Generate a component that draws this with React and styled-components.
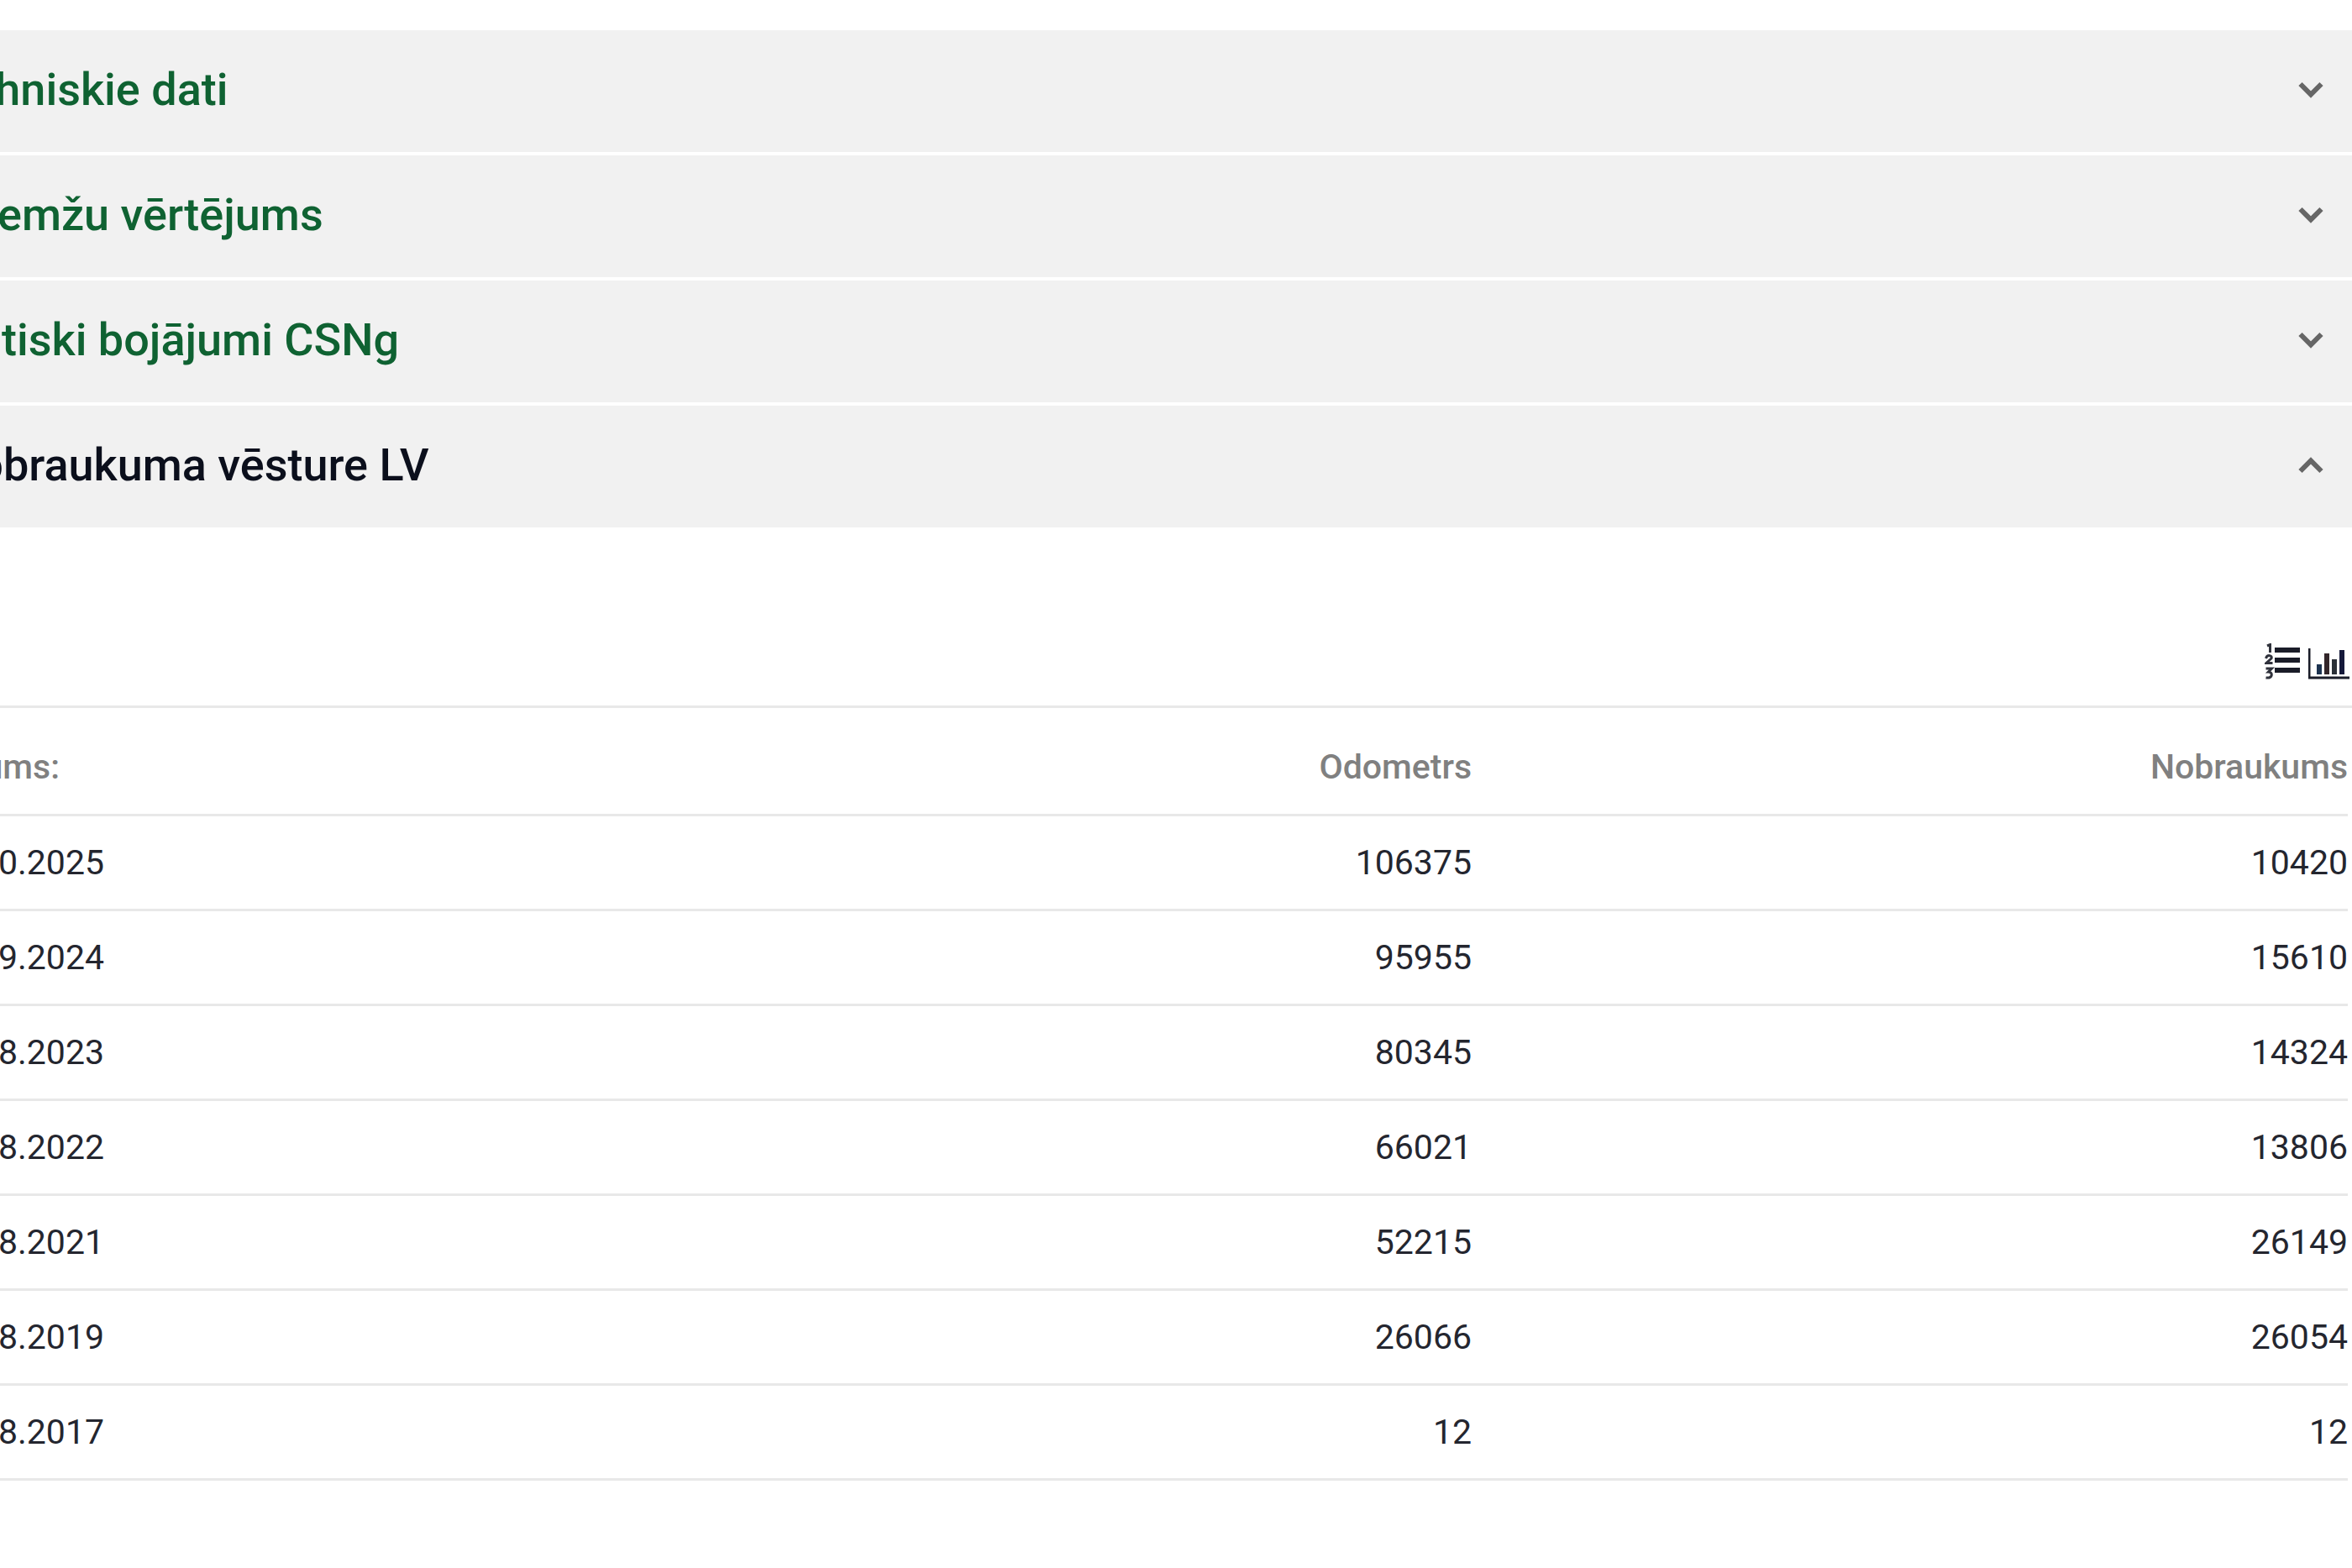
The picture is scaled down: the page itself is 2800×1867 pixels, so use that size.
import React from "react";
import styled, { createGlobalStyle } from "styled-components";

const Global = createGlobalStyle`
  html, body { margin: 0; padding: 0; background: #fff; }
  body { font-family: Roboto, "Liberation Sans", sans-serif; }
`;

const Page = styled.div`
  width: 2800px;
  height: 1867px;
  overflow: hidden;
  background: #fff;
  padding-top: 36px;
  box-sizing: border-box;
`;

const Accordion = styled.section`
  display: flex;
  flex-direction: column;
  gap: 4.5px;
`;

const AccordionRow = styled.div`
  height: 144.5px;
  box-sizing: border-box;
  margin-left: -65px;
  padding: 0 34px 3px 0;
  display: flex;
  align-items: center;
  justify-content: space-between;
  background: #f1f1f1;
`;

const AccordionTitle = styled.span`
  font-size: 54px;
  font-weight: 500;
  color: ${(p) => (p.$open ? "#0b0f1c" : "#0f6232")};
`;

const Chevron = styled.svg`
  width: 30px;
  height: 20px;
  fill: none;
  stroke: #666;
  stroke-width: 6;
  transform: ${(p) => (p.$open ? "rotate(180deg)" : "none")};
`;

const Toolbar = styled.div`
  height: 212px;
  display: flex;
  align-items: flex-end;
  justify-content: flex-end;
  gap: 7px;
  padding-right: 3px;
  padding-bottom: 30px;
  box-sizing: border-box;
`;

const ToolIcon = styled.svg`
  display: block;
  fill: #1a1c28;
`;

const Table = styled.div`
  border-top: 3px solid #e8e8e8;
  margin-left: -82px;
  padding-right: 5px;
`;

const Row = styled.div`
  display: grid;
  grid-template-columns: 1fr auto 1043px;
  height: ${(p) => (p.$head ? "129px" : "113px")};
  padding-top: ${(p) => (p.$head ? "15px" : "0")};
  box-sizing: border-box;
  border-bottom: 3px solid #e8e8e8;
  align-items: center;
  font-size: 41px;
  font-weight: ${(p) => (p.$head ? 500 : 400)};
  color: ${(p) => (p.$head ? "#808080" : "#24262f")};
`;

const Cell = styled.span`
  text-align: ${(p) => (p.$left ? "left" : "right")};
`;

const titles = ["Tehniskie dati", "Dzemžu vērtējums", "Kritiski bojājumi CSNg"];

const rows = [
  ["15.10.2025", "106375", "10420"],
  ["12.09.2024", "95955", "15610"],
  ["18.08.2023", "80345", "14324"],
  ["11.08.2022", "66021", "13806"],
  ["10.08.2021", "52215", "26149"],
  ["13.08.2019", "26066", "26054"],
  ["15.08.2017", "12", "12"],
];

const ChevronIcon = ({ open }) => (
  <Chevron $open={open} viewBox="0 0 30 20">
    <path d="M2.5 3 L15 15.5 L27.5 3" />
  </Chevron>
);

const ListIcon = () => (
  <ToolIcon width="44" height="44" viewBox="0 0 44 44">
    <rect x="12" y="5" width="30" height="6" />
    <rect x="12" y="17" width="30" height="6" />
    <rect x="12" y="29" width="30" height="6" />
    <g fill="none" stroke="#30323c" strokeWidth="3">
      <path d="M3 3 L6.5 1.5 V11" />
      <path d="M1.5 18 C3 13 9.5 14 8 18 L2 23.5 H9.5" />
      <path d="M1.5 30 H8.5 L4.5 34 C10 34 10 42 1.5 41" />
    </g>
  </ToolIcon>
);

const ChartIcon = () => (
  <ToolIcon width="50" height="38" viewBox="0 0 50 38">
    <path d="M1 0 H3.5 V33.5 H50 V36.5 H1 Z" />
    <rect x="11" y="19" width="6" height="12" fill="#1d3350" />
    <rect x="20" y="6" width="6" height="25" fill="#33262a" />
    <rect x="29" y="13" width="6" height="18" fill="#2b3038" />
    <rect x="38" y="2" width="6" height="29" fill="#15193a" />
  </ToolIcon>
);

export default function App() {
  return (
    <Page>
      <Global />
      <Accordion>
        {titles.map((t) => (
          <AccordionRow key={t}>
            <AccordionTitle>{t}</AccordionTitle>
            <ChevronIcon />
          </AccordionRow>
        ))}
        <AccordionRow>
          <AccordionTitle $open>Nobraukuma vēsture LV</AccordionTitle>
          <ChevronIcon open />
        </AccordionRow>
      </Accordion>
      <Toolbar>
        <ListIcon />
        <ChartIcon />
      </Toolbar>
      <Table>
        <Row $head>
          <Cell $left>Datums:</Cell>
          <Cell>Odometrs</Cell>
          <Cell>Nobraukums</Cell>
        </Row>
        {rows.map(([d, o, n]) => (
          <Row key={d}>
            <Cell $left>{d}</Cell>
            <Cell>{o}</Cell>
            <Cell>{n}</Cell>
          </Row>
        ))}
      </Table>
    </Page>
  );
}
